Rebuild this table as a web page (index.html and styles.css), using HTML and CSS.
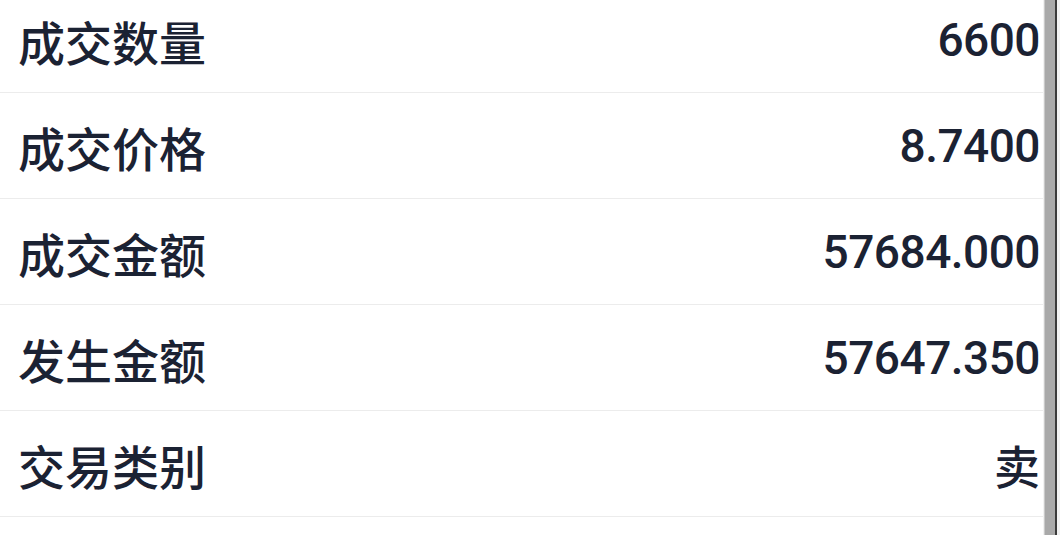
FILE: index.html
```html
<!DOCTYPE html>
<html lang="zh-CN"><head>
  <meta charset="UTF-8">
  <meta name="viewport" content="width=device-width,initial-scale=1.0">
  <title>成交详情</title>
  <link rel="stylesheet" href="styles.css">
</head><body>
<div id="page">
  <div id="list">
    <div class="row"><span class="label">成交数量</span><span class="value">6600</span></div>
    <div class="row"><span class="label">成交价格</span><span class="value">8.7400</span></div>
    <div class="row"><span class="label">成交金额</span><span class="value">57684.000</span></div>
    <div class="row"><span class="label">发生金额</span><span class="value">57647.350</span></div>
    <div class="row"><span class="label">交易类别</span><span class="value cjk">卖</span></div>
  </div>
  <div id="scrollbar"><div class="thumb"></div></div>
</div>
</body>
</html>
```

FILE: styles.css
```css
html,body{
  height:100%;
  margin:0;
  background:#fff;
  overflow:hidden;
}
#page{
  display:flex;
  height:100%;
}
#list{
  flex:1;
  margin-top:-13px;
}
.row{
  display:flex;
  align-items:center;
  justify-content:space-between;
  height:106px;
  border-bottom:1px solid #ececec;
  padding:1px 3px 0 18px;
  box-sizing:border-box;
  color:#1b2233;
}
.label{
  font-family:"Noto Sans CJK SC",sans-serif;
  font-size:47px;
  font-weight:500;
}
.value{
  font-family:Roboto,"Noto Sans CJK SC",sans-serif;
  font-size:46px;
  font-weight:500;
  letter-spacing:-0.5px;
}
.value.cjk{
  font-family:"Noto Sans CJK SC",sans-serif;
  letter-spacing:0;
}
#scrollbar{
  width:17px;
  display:flex;
  background:#f2f2f2;
}
.thumb{
  margin-left:1px;
  width:13px;
  background:#a9a9a9;
  border-left:1px solid #c9c9c9;
  border-right:2px solid #3a3a3a;
  box-sizing:border-box;
}
```
